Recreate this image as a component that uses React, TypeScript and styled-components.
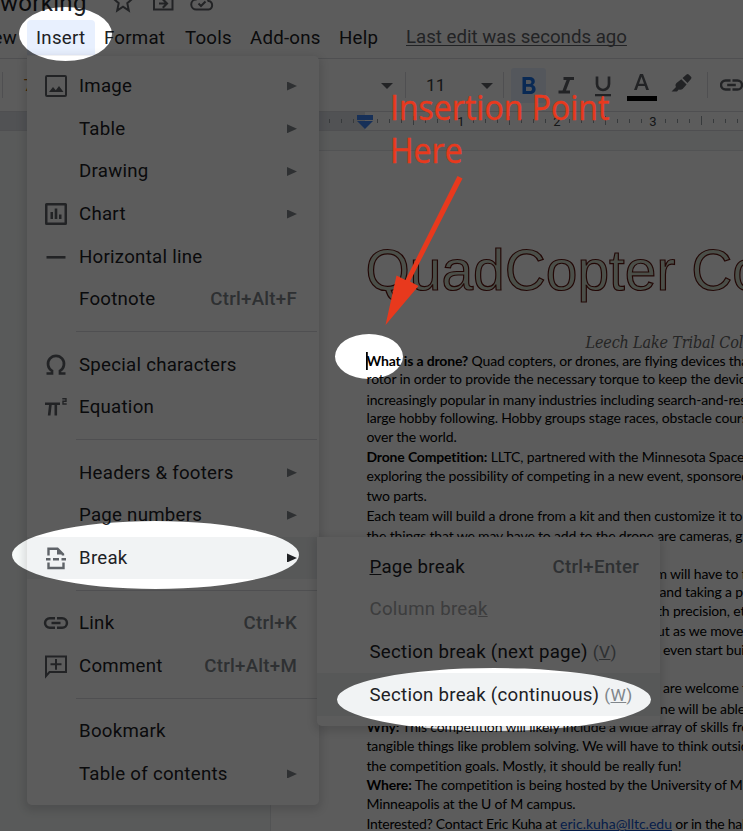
import React from "react";
import styled, { createGlobalStyle } from "styled-components";

const Global = createGlobalStyle`
  * { box-sizing: border-box; }
  body { margin: 0; background: #fff; }
`;

const Screen = styled.div`
  position: relative;
  width: 743px;
  height: 831px;
  overflow: hidden;
  background: #fff;
  font-family: Roboto, sans-serif;
  color: #202124;
`;

const Editor = styled.div`
  display: flex;
  flex-direction: column;
  height: 831px;
`;

const TitleRow = styled.header`
  display: flex;
  height: 20px;
  flex: none;
`;

const DocName = styled.div`
  width: 113px;
  margin-top: -12px;
  font-size: 24px;
  line-height: 30px;
  letter-spacing: 0.3px;
  white-space: nowrap;
`;

const TitleIcon = styled.svg`
  width: 24px;
  height: 24px;
  margin: -11px 16px 0 -1px;
  flex: none;
  fill: #5f6368;
  &:first-of-type { margin-left: -2px; margin-right: 17px; }
`;

const MenuBar = styled.nav`
  display: flex;
  height: 39px;
  flex: none;
  padding-bottom: 3px;
  border-bottom: 1px solid #dadce0;
  font-size: 18.67px;
  letter-spacing: 0.25px;
`;

const MenuTab = styled.div<{ $w: number; $active?: boolean; $end?: boolean }>`
  width: ${(p) => p.$w}px;
  flex: none;
  line-height: 36.5px;
  padding-left: ${(p) => (p.$end ? 0 : 9)}px;
  text-align: ${(p) => (p.$end ? "right" : "left")};
  direction: ${(p) => (p.$end ? "rtl" : "ltr")};
  background: ${(p) => (p.$active ? "#e8f0fe" : "transparent")};
  border-radius: 4px 4px 0 0;
  white-space: nowrap;
`;

const LastEdit = styled.div`
  margin-left: 10px;
  line-height: 35px;
  letter-spacing: 0;
  color: #5f6368;
  text-decoration: underline;
  text-decoration-thickness: 1px;
  text-underline-offset: 2px;
  text-decoration-skip-ink: none;
  white-space: nowrap;
`;

const Toolbar = styled.div`
  display: flex;
  align-items: center;
  height: 53px;
  flex: none;
  border-bottom: 1px solid #dadce0;
  font-size: 17.3px;
`;

const Divider = styled.div`
  width: 1px;
  height: 26px;
  flex: none;
  background: #dadce0;
`;

const ToolText = styled.div<{ $w: number; $pad: number; $color?: string }>`
  width: ${(p) => p.$w}px;
  padding-left: ${(p) => p.$pad}px;
  flex: none;
  color: ${(p) => p.$color ?? "#3c4043"};
`;

const Caret = styled.div<{ $gap: number }>`
  width: 12px;
  height: 6px;
  flex: none;
  margin: 2px ${(p) => p.$gap}px 0 0;
  background: #5f6368;
  clip-path: polygon(0 0, 100% 0, 50% 100%);
`;

const ToolButton = styled.div<{ $active?: boolean; $gap: number }>`
  display: flex;
  justify-content: center;
  align-items: center;
  width: 35px;
  height: 35px;
  flex: none;
  margin-left: ${(p) => p.$gap}px;
  border-radius: 3px;
  background: ${(p) => (p.$active ? "#e8f0fe" : "transparent")};
  fill: ${(p) => (p.$active ? "#1a73e8" : "#5f6368")};
`;

const Ruler = styled.div`
  height: 19px;
  flex: none;
  background: #fff;
  border-bottom: 1px solid #dadce0;
  svg { display: block; }
`;

const Desk = styled.main`
  flex: 1;
  padding: 19px 0 0 270px;
  background: #f6f9f8;
  overflow: hidden;
`;

const Paper = styled.article`
  width: 816px;
  height: 1000px;
  padding: 88px 0 0 95.5px;
  background: #fff;
  border: 1px solid #e3e5e8;
  color: #000;
`;

const Headline = styled.h1`
  margin: 0 0 0 -1px;
  font: 400 56.9px/62px "Liberation Sans", sans-serif;
  color: #cfdcc9;
  -webkit-text-stroke: 1.2px #5e1510;
  white-space: nowrap;
`;

const College = styled.div`
  margin: 32px 0 0 219px;
  font: italic 16px/20px "DejaVu Serif Condensed", "DejaVu Serif", serif;
  letter-spacing: -0.15px;
  height: 18px;
  color: #666;
  white-space: nowrap;
`;

const Line = styled.p<{ $h: number; $x?: number; $ls?: number }>`
  display: flex;
  align-items: flex-end;
  height: ${(p) => p.$h}px;
  margin: 0 0 0 ${(p) => p.$x ?? 0}px;
  font: 400 14px/18px Lato, sans-serif;
  letter-spacing: ${(p) => p.$ls ?? -0.16}px;
  white-space: pre;
  a { color: #1155cc; text-decoration: underline; letter-spacing: 0; }
`;

const Popup = styled.div<{ $x: number; $y: number; $w: number }>`
  position: absolute;
  left: ${(p) => p.$x}px;
  top: ${(p) => p.$y}px;
  width: ${(p) => p.$w}px;
  padding: 8.5px 0 10px;
  background: #fff;
  border-radius: 0 5px 5px 5px;
  box-shadow: 0 3px 8px 3px rgba(60, 64, 67, 0.16);
  font-size: 18.67px;
  letter-spacing: 0.26px;
`;

const Item = styled.div<{ $hover?: boolean; $disabled?: boolean; $sub?: boolean }>`
  display: flex;
  align-items: center;
  height: 42.67px;
  padding: 0 ${(p) => (p.$sub ? 21 : 22)}px 0 ${(p) => (p.$sub ? 52.5 : 17)}px;
  background: ${(p) => (p.$hover ? "#f1f3f4" : "transparent")};
  color: ${(p) => (p.$disabled ? "#a8a9ab" : "#202124")};
  white-space: pre;
`;

const IconCell = styled.span`
  display: flex;
  width: 35px;
  flex: none;
  svg { width: 24px; height: 24px; fill: #5f6368; overflow: visible; }
`;

const Label = styled.span`
  flex: 1;
`;

const Shortcut = styled.span`
  color: #80868b;
  font-weight: 500;
`;

const Key = styled.span`
  color: #80868b;
  font-size: 17.3px;
`;

const Arrow = styled.span<{ $dark?: boolean }>`
  width: 10px;
  height: 9px;
  background: ${(p) => (p.$dark ? "#202124" : "#80868b")};
  clip-path: polygon(0 0, 100% 50%, 0 100%);
`;

const Separator = styled.div`
  height: 1px;
  margin: 10.67px 2px 11px 49px;
  background: #dadce0;
`;

const Overlay = styled.svg`
  position: absolute;
  inset: 0;
`;

const Note = styled.div`
  position: absolute;
  left: 390px;
  top: 85px;
  font: 400 35px/43px "Open Sans", sans-serif;
  -webkit-text-stroke: 0.4px #e8391d;
  color: #e8391d;
  white-space: nowrap;
  transform: scaleX(0.915);
  transform-origin: 0 0;
`;

const linkLeft = "M2.300 12c0-2 1.500-3.500 3.500-3.500H11V6H5.800a6 6 0 0 0 0 12H11v-2.500H5.800c-2 0-3.500-1.500-3.500-3.500z";
const linkRight = "M18.200 6H13v2.500h5.200a3.500 3.500 0 0 1 0 7H13V18h5.200a6 6 0 0 0 0-12z";

const LinkIcon = () => (
  <svg width="24" height="24" viewBox="0 0 24 24" fill="#5f6368">
    <path d={`${linkLeft}M7.500 13.300h9v-2.600h-9z${linkRight}`} />
  </svg>
);

const icons: Record<string, React.ReactNode> = {
  image: <svg viewBox="0 0 24 24"><path fillRule="evenodd" d="M3 1h18a2 2 0 0 1 2 2v18a2 2 0 0 1-2 2H3a2 2 0 0 1-2-2V3a2 2 0 0 1 2-2zm0 2v18h18V3zM5 18l4-5 2.800 3.200L15 12l4.500 6z" /></svg>,
  chart: <svg viewBox="0 0 24 24"><path fillRule="evenodd" d="M2.500 1h19A1.500 1.500 0 0 1 23 2.500v19a1.500 1.500 0 0 1-1.500 1.500h-19A1.500 1.500 0 0 1 1 21.500v-19A1.500 1.500 0 0 1 2.500 1zM3.500 3.500v17h17v-17zM6.500 10h2.500v7H6.500zM10.700 6.500h2.600V17h-2.600zM15 12.500h2.500V17H15z" /></svg>,
  rule: <svg viewBox="0 0 24 24"><path d="M2.500 11h19v2.600h-19z" /></svg>,
  omega: <svg viewBox="0 0 24 24"><path d="M2.500 20.500h5.500v-2.700A8 8 0 1 1 16 17.800v2.700h5.500" fill="none" stroke="#5f6368" strokeWidth="2.700" /></svg>,
  pi: <svg viewBox="0 0 24 24"><path d="M1 7.500h15V10H1zM5 10h2.700L6.500 20.500H3.800zM10.500 10h2.600v10.500h-2.600z" /><path d="M18.300 3.700h3.700v2.600h-3v2.700h3.700" fill="none" stroke="#5f6368" strokeWidth="1.400" /></svg>,
  pageBreak: <svg viewBox="0 0 24 24"><path d="M4.500 9.500V2.700h9l5.500 5.500v1.300M4.500 16.500v5.500h15v-5.500" fill="none" stroke="#5f6368" strokeWidth="2.400" /><path d="M13 2v6.500h6.500zM2 12h4.500v2.400H2zM9 12h6v2.400H9zM17.500 12H22v2.400h-4.500z" /></svg>,
  link: <LinkIcon />,
  comment: <svg viewBox="0 0 24 24"><path d="M2 22V2.500h20V18H5.500z" fill="none" stroke="#5f6368" strokeWidth="2" /><path d="M11 5h2v4.300h4.500v2H13v4.400h-2v-4.400H6.500v-2H11z" /></svg>,
};

type Entry = { label: string; icon?: string; arrow?: boolean; keys?: string; hover?: boolean };
const sections: Entry[][] = [
  [
    { label: "Image", icon: "image", arrow: true },
    { label: "Table", arrow: true },
    { label: "Drawing", arrow: true },
    { label: "Chart", icon: "chart", arrow: true },
    { label: "Horizontal line", icon: "rule" },
    { label: "Footnote", keys: "Ctrl+Alt+F" },
  ],
  [
    { label: "Special characters", icon: "omega" },
    { label: "Equation", icon: "pi" },
  ],
  [
    { label: "Headers & footers", arrow: true },
    { label: "Page numbers", arrow: true },
    { label: "Break", icon: "pageBreak", arrow: true, hover: true },
  ],
  [
    { label: "Link", icon: "link", keys: "Ctrl+K" },
    { label: "Comment", icon: "comment", keys: "Ctrl+Alt+M" },
  ],
  [{ label: "Bookmark" }, { label: "Table of contents", arrow: true }],
];

type TextLine = { h: number; b?: string; t?: string; x?: number; ls?: number; mail?: boolean };
const lines: TextLine[] = [
  { h: 19, b: "What is a drone?", t: " Quad copters, or drones, are flying devices that use" },
  { h: 18, t: "rotor in order to provide the necessary torque to keep the device" },
  { h: 21, t: "increasingly popular in many industries including search-and-rescue" },
  { h: 18, t: "large hobby following. Hobby groups stage races, obstacle courses" },
  { h: 19, t: "over the world." },
  { h: 20, b: "Drone Competition:", t: " LLTC, partnered with the Minnesota Space" },
  { h: 19, t: "exploring the possibility of competing in a new event, sponsored" },
  { h: 20, t: "two parts." },
  { h: 19.5, t: "Each team will build a drone from a kit and then customize it to" },
  { h: 20, t: "the things that we may have to add to the drone are cameras, g" },
  { h: 38.7, x: 289, t: "m will have to fly" },
  { h: 18.3, x: 293, t: "and taking a p" },
  { h: 19, x: 290.5, t: "th precision, etc" },
  { h: 20, x: 290.5, t: "ut as we move" },
  { h: 18.7, x: 296.5, t: "even start bui" },
  { h: 38.3, x: 296.5, t: "are welcome to" },
  { h: 20.7, x: 293.5, t: "ne will be able" },
  { h: 18, b: "Why:", t: " This competition will likely include a wide array of skills from" },
  { h: 19.3, t: "tangible things like problem solving. We will have to think outside" },
  { h: 19.7, t: "the competition goals. Mostly, it should be really fun!" },
  { h: 19.3, b: "Where:", t: " The competition is being hosted by the University of Minn" },
  { h: 19, t: "Minneapolis at the U of M campus." },
  { h: 19.7, t: "Interested? Contact Eric Kuha at ", mail: true, ls: -0.24 },
];

const ticks = Array.from({ length: 37 }, (_, i) => i - 3).filter((i) => i !== 0 && (i < 0 || i % 8 !== 0));

export default function App() {
  return (
    <Screen>
      <Global />
      <Editor>
        <TitleRow>
          <DocName>working</DocName>
          <TitleIcon viewBox="0 0 24 24"><path d="m12 3 2.700 6.200 6.600.6-5 4.400 1.500 7.300-5.800-3.800-5.800 3.800 1.500-7.300-5-4.400 6.600-.6z" fill="none" stroke="#5f6368" strokeWidth="2" /></TitleIcon>
          <TitleIcon viewBox="0 0 24 24"><path d="M3 4v16.500h18.500V4z" fill="none" stroke="#5f6368" strokeWidth="2" /><path d="M8 13.500h5.500l-2.500-2.500 1.500-1.500 5 5-5 5-1.500-1.500 2.500-2.500H8z" /></TitleIcon>
          <TitleIcon viewBox="0 0 24 24"><path d="M6.500 20.500a5 5 0 0 1-.5-10A7 7 0 0 1 18.500 12a4.300 4.300 0 0 1 0 8.500zM8.500 14.500l2.500 2.500 4.500-4.500" fill="none" stroke="#5f6368" strokeWidth="2" /></TitleIcon>
        </TitleRow>
        <MenuBar>
          <MenuTab $w={17} $end>View</MenuTab>
          <MenuTab $w={10} />
          <MenuTab $w={68} $active>Insert</MenuTab>
          <MenuTab $w={81}>Format</MenuTab>
          <MenuTab $w={65}>Tools</MenuTab>
          <MenuTab $w={89}>Add-ons</MenuTab>
          <MenuTab $w={66}>Help</MenuTab>
          <LastEdit>Last edit was seconds ago</LastEdit>
        </MenuBar>
        <Toolbar>
          <ToolText $w={2} $pad={0} />
          <Divider />
          <ToolText $w={264} $pad={20.5} $color="#b06000">75%</ToolText>
          <ToolText $w={114} $pad={4}>Calibri</ToolText>
          <Caret $gap={12} />
          <Divider />
          <ToolText $w={75} $pad={20}>11</ToolText>
          <Caret $gap={10} />
          <Divider />
          <ToolButton $active $gap={7}>
            <svg width="24" height="24" viewBox="0 0 24 24"><path fillRule="evenodd" d="M5.500 4h7.300c3 0 5 1.700 5 4.300 0 1.700-.8 3-2.200 3.700 1.900.6 3 2.100 3 4.200 0 2.900-2.200 4.800-5.400 4.800H5.500zM9 7v4h3.400c1.300 0 2-.8 2-2s-.7-2-2-2zM9 13.800v4.200h3.900c1.300 0 2.100-.8 2.100-2.100s-.8-2.100-2.100-2.100z" /></svg>
          </ToolButton>
          <ToolButton $gap={2}>
            <svg width="24" height="24" viewBox="0 0 24 24"><path d="M9.500 4H20v3h-4l-4 10.500h4v3H4.500v-3h4L12.500 7h-3z" /></svg>
          </ToolButton>
          <ToolButton $gap={2}>
            <svg width="24" height="24" viewBox="0 0 24 24"><path d="M6 3.500v7.500a6 6 0 0 0 12 0V3.500" fill="none" stroke="#5f6368" strokeWidth="2.700" /><path d="M4 21h16v2.300H4z" /></svg>
          </ToolButton>
          <ToolButton $gap={4}>
            <svg width="30" height="33" viewBox="0 -1 30 33"><path fillRule="evenodd" d="M13 4h3l6 16h-2.800l-1.400-4h-6.600l-1.400 4H7zM12 13.700h5L14.500 6.700z" /><path d="M0 26h30v5H0z" fill="#000" /></svg>
          </ToolButton>
          <ToolButton $gap={4}>
            <svg width="24" height="24" viewBox="0 0 24 24"><path d="M17.500 1.500c.8-.7 1.500-.7 2.200 0l2.300 2.300c.6.700.6 1.400 0 2.100L18.500 10l-5-5zM12.300 6.200l5.300 5.300-4 4.500c-1.300 1-2.600 1-3.800.4L8 18.500H2.500L7 14c-.8-1.500-.7-2.800.5-4z" /></svg>
          </ToolButton>
          <ToolText $w={9} $pad={0} />
          <Divider />
          <ToolText $w={12} $pad={0} />
          <LinkIcon />
        </Toolbar>
        <Ruler>
          <svg width="743" height="18" viewBox="0 0 743 18" fontFamily="Roboto" fontSize="13">
            <path d="M0 0h365v18H0z" fill="#dfe2e8" />
            {ticks.map((i) => (
              <rect key={i} x={365 + i * 12} y={i % 4 === 0 ? 4 : 7} width="1" height={i % 4 === 0 ? 9 : 4} fill="#9aa0a6" />
            ))}
            {[1, 2, 3].map((n) => (
              <text key={n} x={365 + n * 96} y="14" textAnchor="middle" fill="#3c4043">{n}</text>
            ))}
            <path d="M357 3h16v5h-16zM357 9h16l-8 8z" fill="#4285f4" />
          </svg>
        </Ruler>
        <Desk>
          <Paper>
            <Headline>QuadCopter Competition</Headline>
            <College>Leech Lake Tribal College</College>
            {lines.map((l, i) => (
              <Line key={i} $h={l.h} $x={l.x} $ls={l.ls}>
                <span>
                  {l.b && <b>{l.b}</b>}
                  {l.t}
                  {l.mail && <><a>eric.kuha@lltc.edu</a> or in the hall</>}
                </span>
              </Line>
            ))}
          </Paper>
        </Desk>
      </Editor>

      <Popup $x={27} $y={56.25} $w={292}>
        {sections.map((group, g) => (
          <React.Fragment key={g}>
            {g > 0 && <Separator />}
            {group.map((e) => (
              <Item key={e.label} $hover={e.hover}>
                <IconCell>{e.icon && icons[e.icon]}</IconCell>
                <Label>{e.label}</Label>
                {e.keys && <Shortcut>{e.keys}</Shortcut>}
                {e.arrow && <Arrow $dark={e.hover} />}
              </Item>
            ))}
          </React.Fragment>
        ))}
      </Popup>

      <Popup $x={317} $y={537} $w={343}>
        <Item $sub><Label><u>P</u>age break</Label><Shortcut>Ctrl+Enter</Shortcut></Item>
        <Item $sub $disabled><Label>Column brea<u>k</u></Label></Item>
        <Item $sub>Section break (next page) <Key>(<u>V</u>)</Key></Item>
        <Item $sub $hover>Section break (continuous) <Key>(<u>W</u>)</Key></Item>
      </Popup>

      <Overlay width="743" height="831" viewBox="0 0 743 831">
        <path
          fill="#000"
          fillOpacity="0.64"
          fillRule="evenodd"
          d="M0 0H743V831H0ZM19 34a46.500 27 0 1 0 93 0a46.500 27 0 1 0 -93 0ZM12 555a143.500 34 0 1 0 287 0a143.500 34 0 1 0 -287 0ZM335 356.500a34 22.500 0 1 0 68 0a34 22.500 0 1 0 -68 0ZM337 699.500a157 31.500 0 1 0 314 0a157 31.500 0 1 0 -314 0Z"
        />
        <path d="M366 352h1.800v18H366z" fill="#000" />
        <path d="M457.500 176l5 2.500-52.500 103 8.500 4.500L385.500 325l11-49.500 9 4.500z" fill="#e8391d" />
      </Overlay>
      <Note>Insertion Point<br />Here</Note>
    </Screen>
  );
}
